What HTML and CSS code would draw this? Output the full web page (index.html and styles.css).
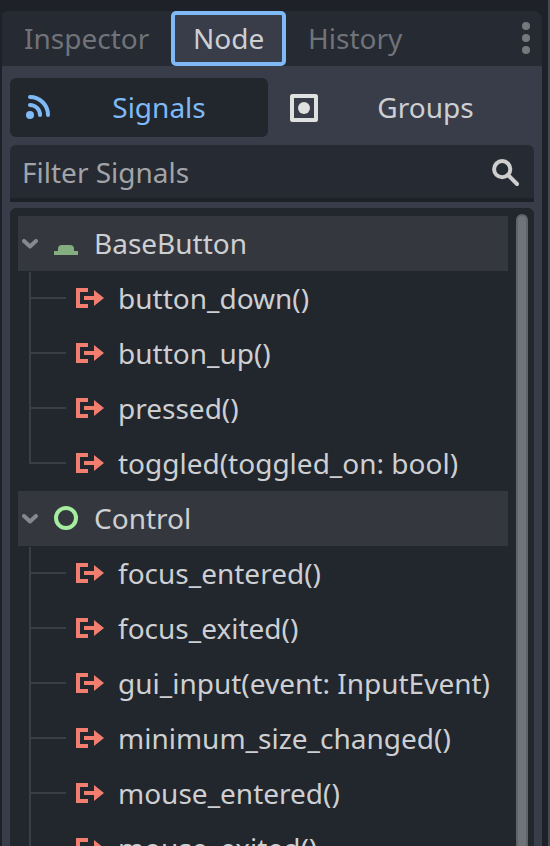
FILE: index.html
```
<!DOCTYPE html>
<html lang="en">
<head>
<meta charset="utf-8">
<title>Node dock</title>
<link rel="stylesheet" href="styles.css">
</head>
<body>
<svg class="defs" width="0" height="0">
  <symbol id="signal" viewBox="0 0 28 20"><path d="M0 0h12v4H4v12h8v4H0z"/><path d="M8 8h10V2l10 8-10 8v-6H8z"/></symbol>
  <symbol id="chevron" viewBox="0 0 16 10"><path d="M2 2l6 5.5L14 2" fill="none" stroke="#85888c" stroke-width="4" stroke-linecap="round" stroke-linejoin="round"/></symbol>
</svg>
<main class="dock">
  <nav class="tabs">
    <div class="tab inspector">Inspector</div>
    <div class="tab active">Node</div>
    <div class="tab history">History</div>
    <svg class="dots" width="8" height="32" viewBox="0 0 8 32"><circle cx="4" cy="4" r="4"/><circle cx="4" cy="16" r="4"/><circle cx="4" cy="28" r="4"/></svg>
  </nav>
  <section class="content">
    <div class="modes">
      <div class="mode selected">
        <svg width="24" height="24" viewBox="0 0 24 24"><circle cx="4" cy="20" r="4" fill="#7fbaf7"/><path d="M4 10a10 10 0 0 1 10 10M4 2a18 18 0 0 1 18 18" fill="none" stroke="#7fbaf7" stroke-width="4" stroke-linecap="round"/></svg>
        <span>Signals</span>
      </div>
      <div class="mode">
        <svg width="28" height="28" viewBox="0 0 28 28"><rect x="2" y="2" width="24" height="24" rx=".5" fill="none" stroke="#e0e0e0" stroke-width="4" stroke-linejoin="round"/><circle cx="14" cy="14" r="6" fill="#e0e0e0"/></svg>
        <span>Groups</span>
      </div>
    </div>
    <div class="filter">
      <span>Filter Signals</span>
      <svg width="28" height="28" viewBox="0 0 28 28" fill="none" stroke="#cdcecd" stroke-width="4"><circle cx="10.2" cy="10.2" r="8.1"/><path d="M16 16l9 9" stroke-linecap="round"/></svg>
    </div>
    <div class="tree">
      <div class="rows">
        <div class="group"><svg class="chev"><use href="#chevron"/></svg><svg class="type" viewBox="0 0 24 24"><path d="M0 20h4v-2q0-4 4-4h8q4 0 4 4v2h4v4H0z" fill="#84ad80"/></svg><span>BaseButton</span></div>
        <div class="signal"><svg><use href="#signal"/></svg><span>button_down()</span></div>
        <div class="signal"><svg><use href="#signal"/></svg><span>button_up()</span></div>
        <div class="signal"><svg><use href="#signal"/></svg><span>pressed()</span></div>
        <div class="signal last"><svg><use href="#signal"/></svg><span>toggled(toggled_on: bool)</span></div>
        <div class="group"><svg class="chev"><use href="#chevron"/></svg><svg class="type" viewBox="0 0 24 24"><circle cx="12" cy="12" r="10" fill="none" stroke="#a5ee9f" stroke-width="4"/></svg><span>Control</span></div>
        <div class="signal"><svg><use href="#signal"/></svg><span>focus_entered()</span></div>
        <div class="signal"><svg><use href="#signal"/></svg><span>focus_exited()</span></div>
        <div class="signal"><svg><use href="#signal"/></svg><span>gui_input(event: InputEvent)</span></div>
        <div class="signal"><svg><use href="#signal"/></svg><span>minimum_size_changed()</span></div>
        <div class="signal"><svg><use href="#signal"/></svg><span>mouse_entered()</span></div>
        <div class="signal"><svg><use href="#signal"/></svg><span>mouse_exited()</span></div>
      </div>
      <div class="scrollbar"></div>
    </div>
  </section>
</main>
</body>
</html>
```
FILE: styles.css
```
* { box-sizing: border-box; }
body {
  margin: 0;
  height: 846px;
  overflow: hidden;
  padding: 11px 6px 0 2px;
  background: #1e2128;
  border-right: 2px solid #47494d;
  font: 28px/55px "Noto Sans", sans-serif;
  color: #cdcfd2;
  white-space: nowrap;
}
svg { display: block; flex: none; overflow: visible; }
.defs { position: absolute; }
.dock {
  height: 835px;
  display: flex;
  flex-direction: column;
  background: #383d49;
  border-radius: 6px 10px 0 0;
  overflow: hidden;
}
.tabs { display: flex; flex: none; height: 55px; background: #262a32; color: #707379; }
.tab { padding-left: 22px; }
.inspector { width: 169px; }
.active {
  width: 115px;
  padding-left: 18px;
  line-height: 47px;
  border: 4px solid #7fbaf7;
  border-radius: 5px;
  background: #383d49;
  color: #cdcfd2;
}
.dots { margin: 11px 12px 0 auto; fill: #75787d; }
.content { flex: 1; min-height: 0; padding: 12px 8px 0; display: flex; flex-direction: column; }
.modes { display: grid; grid-template-columns: 258px 258px; gap: 8px; flex: none; height: 59px; line-height: 59px; }
.mode { display: flex; align-items: center; border-radius: 6px; padding: 0 14px; }
.mode span { flex: 1; text-align: center; padding-left: 13px; }
.selected { background: #22272e; color: #7fbaf7; padding-left: 16px; }
.selected span { padding-left: 14px; }
.selected svg { margin-top: -1px; }
.filter {
  flex: none;
  height: 57px;
  margin: 8px 0 6px;
  padding: 0 14px 0 12px;
  display: flex;
  justify-content: space-between;
  line-height: 54px;
  background: #262a32;
  color: #a2a4a8;
  border-bottom: 4px solid #1e2128;
  border-radius: 6px 6px 0 0;
}
.filter svg { margin-top: 14px; }
.tree {
  flex: 1;
  min-height: 0;
  display: flex;
  justify-content: space-between;
  padding: 8px 6px 0 8px;
  background: #22262d;
  border-radius: 6px 6px 0 0;
}
.rows { width: 490px; }
.group, .signal { display: flex; height: 55px; }
.group { background: #34383e; padding-left: 4px; }
.chev { width: 16px; height: 10px; margin: 23px 16px 0 0; }
.type { width: 24px; height: 24px; margin: 15px 16px 0 0; }
.signal {
  padding-left: 58px;
  background:
    linear-gradient(#3b3e45, #3b3e45) 13px 26px / 35px 2px no-repeat,
    linear-gradient(#3b3e45, #3b3e45) 11px 0 / 2px 100% no-repeat;
}
.group + .signal { background-position: 13px 26px, 11px 1px; }
.signal.last { background-size: 35px 2px, 2px 28px; }
.signal svg { width: 28px; height: 20px; margin: 17px 14px 0 0; fill: #f27e70; }
.scrollbar {
  width: 12px;
  margin-top: -2px;
  background: #707377;
  border: 2px solid #606367;
  border-bottom: 0;
  border-radius: 6px 6px 0 0;
}
```
